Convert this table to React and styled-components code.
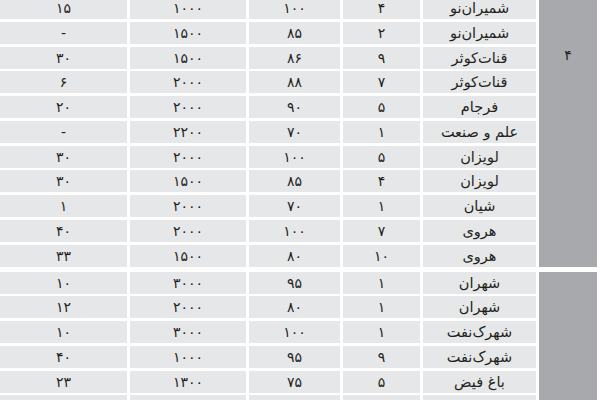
import React from 'react';
import styled, { createGlobalStyle } from 'styled-components';

const GlobalStyle = createGlobalStyle`
  html, body {
    margin: 0;
    padding: 0;
    background: #ffffff;
    overflow: hidden;
  }
  body {
    font-family: 'DejaVu Sans', 'Noto Sans Arabic', sans-serif;
    color: #231f20;
  }
`;

const Page = styled.div`
  width: 600px;
  height: 400px;
  overflow: hidden;
  direction: rtl;
  background: #ffffff;
`;

const Table = styled.div`
  display: flex;
  flex-direction: column;
  gap: 5px;
  margin-top: -3px;
  padding-right: 3px;
`;

const Group = styled.div`
  display: flex;
  gap: 3px;
`;

const GroupCell = styled.div`
  width: 58px;
  flex-shrink: 0;
  background: #a7a9ac;
  text-align: center;
  font-size: 14px;
  line-height: 22px;
  padding-top: ${p => p.$labelTop || 0}px;
  box-sizing: border-box;
`;

const Rows = styled.div`
  width: 536px;
  display: flex;
  flex-direction: column;
  gap: 2.75px;
`;

const Row = styled.div`
  display: flex;
  gap: 3px;
  height: 22px;
`;

const Cell = styled.div`
  width: ${p => p.$w}px;
  flex-shrink: 0;
  background: #e6e7e8;
  text-align: center;
  font-size: ${p => (p.$name ? '14.5px' : '14px')};
  line-height: 22px;
  white-space: nowrap;
`;

const widths = [113, 77, 91, 116, 127];

const groups = [
  {
    label: '۴',
    labelTop: 47,
    rows: [
      ['شمیران‌نو', '۴', '۱۰۰', '۱۰۰۰', '۱۵'],
      ['شمیران‌نو', '۲', '۸۵', '۱۵۰۰', '-'],
      ['قنات‌کوثر', '۹', '۸۶', '۱۵۰۰', '۳۰'],
      ['قنات‌کوثر', '۷', '۸۸', '۲۰۰۰', '۶'],
      ['فرجام', '۵', '۹۰', '۲۰۰۰', '۲۰'],
      ['علم و صنعت', '۱', '۷۰', '۲۲۰۰', '-'],
      ['لویزان', '۵', '۱۰۰', '۲۰۰۰', '۳۰'],
      ['لویزان', '۴', '۸۵', '۱۵۰۰', '۳۰'],
      ['شیان', '۱', '۷۰', '۲۰۰۰', '۱'],
      ['هروی', '۷', '۱۰۰', '۲۰۰۰', '۴۰'],
      ['هروی', '۱۰', '۸۰', '۱۵۰۰', '۳۳'],
    ],
  },
  {
    label: '',
    labelTop: 0,
    rows: [
      ['شهران', '۱', '۹۵', '۳۰۰۰', '۱۰'],
      ['شهران', '۱', '۸۰', '۲۰۰۰', '۱۲'],
      ['شهرک‌نفت', '۱', '۱۰۰', '۳۰۰۰', '۱۰'],
      ['شهرک‌نفت', '۹', '۹۵', '۱۰۰۰', '۴۰'],
      ['باغ فیض', '۵', '۷۵', '۱۳۰۰', '۲۳'],
      ['', '', '', '', ''],
    ],
  },
];

const App = () => {
  return (
    <>
      <GlobalStyle />
      <Page>
        <Table>
          {groups.map((group, gi) => (
            <Group key={gi}>
              <GroupCell $labelTop={group.labelTop}>{group.label}</GroupCell>
              <Rows>
                {group.rows.map((row, ri) => (
                  <Row key={ri}>
                    {row.map((value, ci) => (
                      <Cell key={ci} $w={widths[ci]} $name={ci === 0}>
                        {value}
                      </Cell>
                    ))}
                  </Row>
                ))}
              </Rows>
            </Group>
          ))}
        </Table>
      </Page>
    </>
  );
};

export default App;
